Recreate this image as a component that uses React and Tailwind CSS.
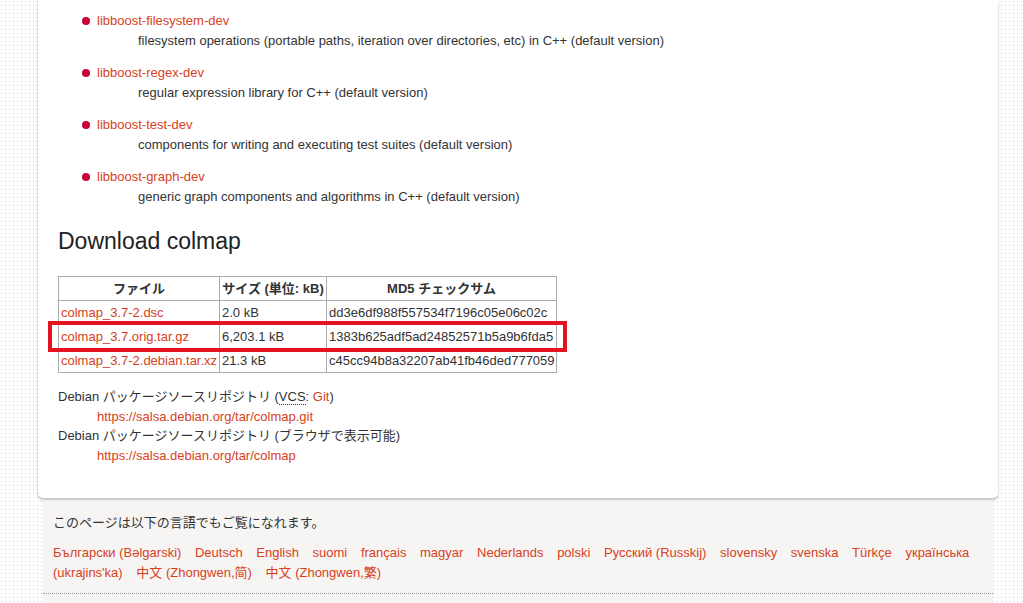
import React from "react";

const LINK = "text-[#d8411c] no-underline";

const pkgs = [
  ["libboost-filesystem-dev", "filesystem operations (portable paths, iteration over directories, etc) in C++ (default version)"],
  ["libboost-regex-dev", "regular expression library for C++ (default version)"],
  ["libboost-test-dev", "components for writing and executing test suites (default version)"],
  ["libboost-graph-dev", "generic graph components and algorithms in C++ (default version)"],
];

const rows = [
  ["colmap_3.7-2.dsc", "2.0 kB", "dd3e6df988f557534f7196c05e06c02c"],
  ["colmap_3.7.orig.tar.gz", "6,203.1 kB", "1383b625adf5ad24852571b5a9b6fda5"],
  ["colmap_3.7-2.debian.tar.xz", "21.3 kB", "c45cc94b8a32207ab41fb46ded777059"],
];

const langs = [
  ["Български (Bəlgarski)"],
  ["Deutsch"],
  ["English"],
  ["suomi"],
  ["français"],
  ["magyar"],
  ["Nederlands"],
  ["polski"],
  ["Русский (Russkij)"],
  ["slovensky"],
  ["svenska"],
  ["Türkçe"],
  ["українська", "(ukrajins'ka)"],
  ["中文 (Zhongwen,简)"],
  ["中文 (Zhongwen,繁)"],
];

export default function App() {
  return (
    <div
      className="h-[603px] w-[1023px] overflow-hidden text-[13px] leading-[20px] text-[#333] bg-white bg-[image:radial-gradient(circle_at_1.5px_1.5px,#cfcfcf_0.6px,transparent_0.9px)] bg-[size:4px_4px]"
      style={{ fontFamily: '"Liberation Sans", Arial, "Noto Sans CJK JP", sans-serif' }}
    >
      {/* main card */}
      <div className="ml-[38px] w-[960px] bg-white rounded-b-[5px] shadow-[0_2px_3px_rgba(0,0,0,0.25)] pl-[20px] pt-[11px] pb-[33px]">
        <ul>
          {pkgs.map(([name, desc]) => (
            <li key={name} className="mb-[12px]">
              <div className="flex items-center pl-[24px]">
                <span className="w-[8px] h-[8px] rounded-full bg-[#c70036] mr-[7px]" />
                <a className={LINK}>{name}</a>
              </div>
              <div className="pl-[80px]">{desc}</div>
            </li>
          ))}
        </ul>

        <h2 className="mt-[20px] text-[23px] leading-[28px] text-[#222] font-normal">Download colmap</h2>

        <div className="relative mt-[21px] w-[499px]">
          <table className="border-collapse table-fixed w-[499px] whitespace-nowrap">
            <thead>
              <tr className="h-[24px]">
                <th className="border border-[#ababab] w-[161px] font-bold text-center px-[2px]">ファイル</th>
                <th className="border border-[#ababab] w-[107px] font-bold text-center px-[2px]">サイズ (単位: kB)</th>
                <th className="border border-[#ababab] font-bold text-center px-[2px]">MD5 チェックサム</th>
              </tr>
            </thead>
            <tbody>
              {rows.map(([f, s, m]) => (
                <tr key={f} className="h-[24px]">
                  <td className="border border-[#ababab] px-[2px] overflow-hidden"><a className={LINK}>{f}</a></td>
                  <td className="border border-[#ababab] px-[2px]">{s}</td>
                  <td className="border border-[#ababab] px-[2px]">{m}</td>
                </tr>
              ))}
            </tbody>
          </table>
          <div className="absolute left-[-10px] top-[45px] w-[519px] h-[31px] border-[4px] border-[#e3141f]" />
        </div>

        <div className="mt-[14px] leading-[19.5px]">
          <div>
            Debian パッケージソースリポジトリ (
            <abbr className="no-underline border-b border-dotted border-[#333]">VCS</abbr>:{" "}
            <a className={LINK}>Git</a>)
          </div>
          <div className="pl-[39px]"><a className={LINK}>https://salsa.debian.org/tar/colmap.git</a></div>
          <div>Debian パッケージソースリポジトリ (ブラウザで表示可能)</div>
          <div className="pl-[39px]"><a className={LINK}>https://salsa.debian.org/tar/colmap</a></div>
        </div>
      </div>

      {/* footer */}
      <div className="ml-[43px] mt-[3px] w-[950px] h-[120px] bg-[#f6f5f4]">
        <div className="px-[10px] pt-[12px] pb-[10px] border-b border-dotted border-[#9a9a9a]">
          <p>このページは以下の言語でもご覧になれます。</p>
          <p className="mt-[10px] pr-[10px]">
            {langs.map((parts) => (
              <React.Fragment key={parts.join(" ")}>
                {parts.map((p, i) => (
                  <React.Fragment key={p}>
                    <a className={LINK + " inline-block leading-[20px]" + (i === parts.length - 1 ? " mr-[10px]" : "")}>{p}</a>{" "}
                  </React.Fragment>
                ))}
              </React.Fragment>
            ))}
          </p>
        </div>
      </div>
    </div>
  );
}
